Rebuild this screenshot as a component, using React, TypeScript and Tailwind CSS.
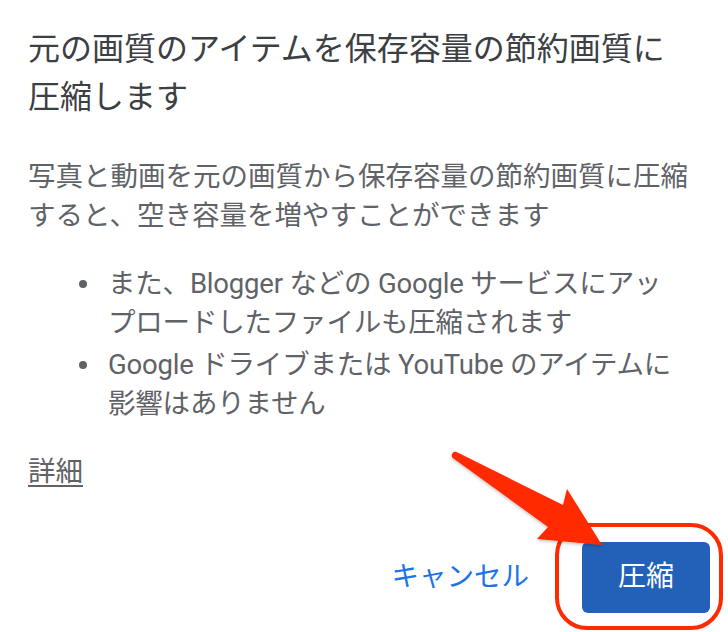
import React from "react";

const bullets: React.ReactNode[] = [
  <>
    また、Blogger などの Google サービスにアッ
    <br />
    プロードしたファイルも圧縮されます
  </>,
  <>
    Google ドライブまたは YouTube のアイテムに
    <br />
    影響はありません
  </>,
];

const Arrow: React.FC = () => (
  <svg
    className="pointer-events-none absolute inset-0 z-20 h-full w-full"
    viewBox="0 0 728 632"
  >
    <defs>
      <filter id="arrow-shadow" x="-20%" y="-20%" width="140%" height="140%">
        <feDropShadow dx="0" dy="1.5" stdDeviation="1.5" floodColor="#000" floodOpacity="0.25" />
      </filter>
    </defs>
    <path
      d="M456.5 452 L563 505 L567 489 L602 545 L537 539 L548 527 L453.5 458.5 A3.6 3.6 0 0 1 456.5 452 Z"
      fill="#ff2a00"
      filter="url(#arrow-shadow)"
    />
  </svg>
);

export default function App() {
  return (
    <div
      className="relative h-[632px] w-[728px] overflow-hidden bg-white"
      style={{ fontFamily: 'Roboto, "Noto Sans CJK JP", sans-serif' }}
    >
      <div className="flex flex-col pl-[28px] pr-[32px] pt-[25px]">
        <h1 className="text-[32px] leading-[48px] font-normal text-[#3c4043]">
          元の画質のアイテムを保存容量の節約画質に圧縮します
        </h1>

        <p className="mt-[36px] text-[27.5px] leading-[39px] text-[#5f6368]">
          写真と動画を元の画質から保存容量の節約画質に圧縮すると、空き容量を増やすことができます
        </p>

        <ul className="mt-[30px] flex flex-col gap-[4px] text-[27.5px] leading-[38.5px] text-[#5f6368]">
          {bullets.map((text, i) => (
            <li key={i} className="flex">
              <span className="flex h-[38.5px] w-[80px] shrink-0 items-center justify-end pr-[21px]">
                <span className="h-[8px] w-[8px] rounded-full bg-[#5f6368]" />
              </span>
              <span className="tracking-[-0.2px]">{text}</span>
            </li>
          ))}
        </ul>

        <a className="mt-[30px] w-fit text-[27.5px] leading-[38.5px] text-[#5f6368] underline underline-offset-[4px]">
          詳細
        </a>

        <div className="mt-[50px] flex items-center justify-end">
          <button className="mr-[53px] text-[27.5px] leading-[38px] font-normal text-[#1a73e8]">
            キャンセル
          </button>
          <div className="relative -mr-[14px]">
            <span className="pointer-events-none absolute -left-[27px] -top-[19px] h-[107px] w-[168px] rounded-[32px] border-[4px] border-[#ff2a00]" />
            <button className="relative flex h-[71px] w-[128px] items-center justify-center rounded-[6px] bg-[#2361b8] text-[28px] font-normal text-white">
              圧縮
            </button>
          </div>
        </div>
      </div>
      <Arrow />
    </div>
  );
}
